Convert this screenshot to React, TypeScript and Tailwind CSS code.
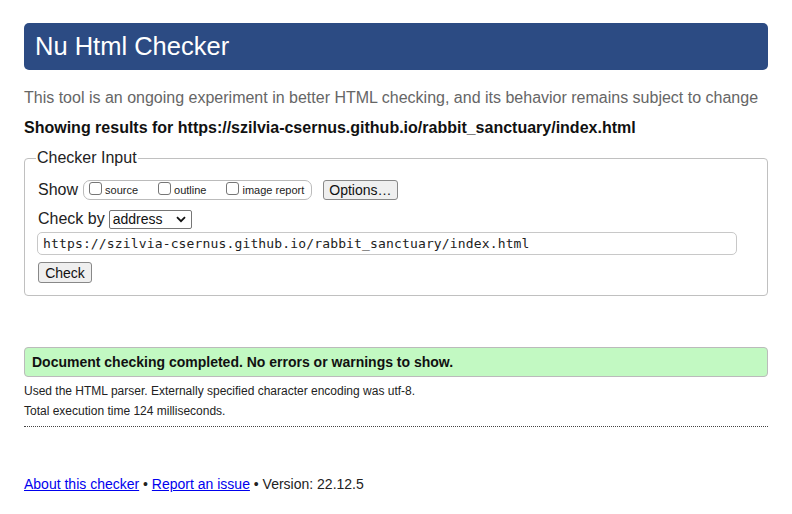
function Checkbox({ label, last }: { label: string; last?: boolean }) {
    return (
        <label className={"flex items-center " + (last ? "" : "mr-[20px]")}>
            <span className="w-[13px] h-[13px] border border-[#767676] rounded-[3px] bg-white mr-[3px] mb-[3px]"></span>
            <span className="text-[11px] text-[#222]">{label}</span>
        </label>
    )
}

function App() {
    return (
        <div className="w-[792px] h-[514px] bg-white px-[24px] pt-[23px] font-['Liberation_Sans',Arial,sans-serif] text-[#222]">
            <div className="h-[47px] bg-[#2c4b83] rounded-[5px] flex items-center px-[11px]">
                <span className="text-white text-[25.5px] leading-none">Nu Html Checker</span>
            </div>
            <div className="mt-[18px] text-[16px] leading-[20px] text-[#666]">
                This tool is an ongoing experiment in better HTML checking, and its behavior remains subject to change
            </div>
            <div className="mt-[10px] text-[16px] leading-[20px] font-bold text-[#111]">
                Showing results for https://szilvia-csernus.github.io/rabbit_sanctuary/index.html
            </div>
            <fieldset className="mt-[8px] h-[150px] border border-[#c0c0c0] rounded-[4px] pl-[13px] pr-[30px] pt-[9px]">
                <legend className="text-[16px] px-[1px] ml-[-2px] text-[#222]">Checker Input</legend>
                <div className="flex items-center h-[22px]">
                    <span className="text-[16px] mr-[5px]">Show</span>
                    <div className="flex items-center h-[20px] border border-[#bbb] rounded-[7px] pl-[5px] pr-[7px]">
                        <Checkbox label="source" />
                        <Checkbox label="outline" />
                        <Checkbox label="image report" last />
                    </div>
                    <button className="ml-[11px] h-[20px] px-[5px] text-[14px] leading-none border border-[#888] rounded-[3px] bg-[#efefef] text-[#111]">
                        Options…
                    </button>
                </div>
                <div className="flex items-center h-[22px] mt-[7px]">
                    <span className="text-[16px] mr-[4px]">Check by</span>
                    <div className="w-[83px] h-[19px] border border-[#767676] rounded-[2px] flex items-center justify-between pl-[3px] pr-[5px] bg-white">
                        <span className="text-[14px] leading-none text-[#111]">address</span>
                        <svg width="10" height="7" viewBox="0 0 10 7"><path d="M1 1.2 L5 5.2 L9 1.2" fill="none" stroke="#111" strokeWidth="1.8" /></svg>
                    </div>
                </div>
                <div className="mt-[2px] h-[23px] border border-[#c8c8c8] rounded-[5px] flex items-center px-[5px] ml-[-1px]">
                    <span className="font-['DejaVu_Sans_Mono',monospace] text-[13px] tracking-[0.15px] text-[#222]">https://szilvia-csernus.github.io/rabbit_sanctuary/index.html</span>
                </div>
                <button className="mt-[7px] h-[21px] w-[54px] text-[14px] leading-none border border-[#888] rounded-[3px] bg-[#efefef] text-[#111]">
                    Check
                </button>
            </fieldset>
            <div className="mt-[51px] h-[30px] bg-[#c2f9c2] border border-[#bbb] rounded-[4px] flex items-center px-[7px]">
                <span className="text-[14px] font-bold text-[#111]">Document checking completed. No errors or warnings to show.</span>
            </div>
            <div className="mt-[6px] text-[12px] leading-[16px] text-[#222]">
                Used the HTML parser. Externally specified character encoding was utf-8.
            </div>
            <div className="mt-[4px] text-[12px] leading-[16px] text-[#222]">
                Total execution time 124 milliseconds.
            </div>
            <div className="mt-[7px] border-b border-dotted border-[#444]"></div>
            <div className="mt-[48px] text-[14px] leading-[18px] text-[#222]">
                <a href="#" className="underline text-[#0000ee]">About this checker</a>
                {" • "}
                <a href="#" className="underline text-[#0000ee]">Report an issue</a>
                {" • Version: 22.12.5"}
            </div>
        </div>
    )
}

export default App;
